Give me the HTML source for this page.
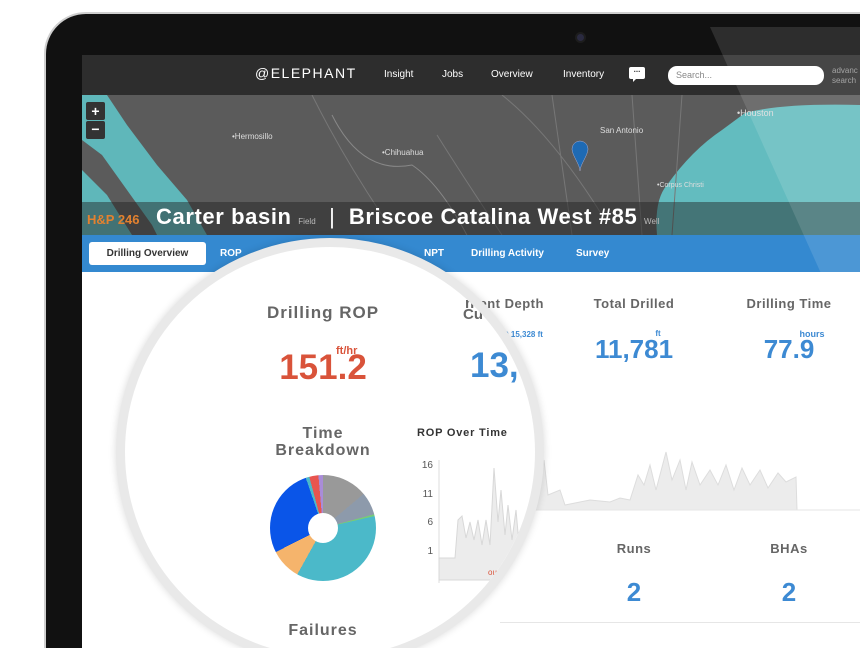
<!DOCTYPE html>
<html style="width:860px;height:648px;overflow:hidden"><head><meta charset="utf-8"><style>
*{margin:0;padding:0;box-sizing:border-box}
body{width:860px;height:648px;overflow:hidden;background:#fff;font-family:"Liberation Sans",sans-serif;position:relative}
#w{position:absolute;left:0;top:0;width:860px;height:648px;overflow:hidden}
.a{position:absolute;white-space:nowrap}
.nav{color:#fff;font-size:10px;top:69px}
.tab{color:#fff;font-size:10px;font-weight:bold;top:248px}
.h{color:#666;font-weight:bold;letter-spacing:.5px;transform:translateX(-50%)}
.bl{color:#3d8ad3;font-weight:bold;transform:translateX(-50%)}
</style></head><body><div id="w">
<div class="a" style="left:44px;top:12px;width:816px;height:636px;background:#111;border-radius:42px 0 0 0;border:2px solid #cfcfcf;border-right:none;border-bottom:none"></div>
<div class="a" style="left:575px;top:32px;width:11px;height:11px;border-radius:50%;background:#2a2a40;border:2px solid #1d1d1d"></div>
<div class="a" style="left:82px;top:272px;width:778px;height:376px;background:#fff"></div>
<div class="a" style="left:82px;top:55px;width:778px;height:40px;background:#2d2d2d"></div>
<div class="a" style="left:255px;top:65px;color:#fff;font-size:14px;letter-spacing:1.5px">@ELEPHANT</div>
<div class="a nav" style="left:384px">Insight</div>
<div class="a nav" style="left:442px">Jobs</div>
<div class="a nav" style="left:491px">Overview</div>
<div class="a nav" style="left:563px">Inventory</div>
<div class="a" style="left:629px;top:67px;width:16px;height:12px;background:#fff;border-radius:2px;color:#333;font-size:8px;line-height:6px;text-align:center;font-weight:bold">...</div>
<div class="a" style="left:633px;top:78px;width:0;height:0;border-left:4px solid #fff;border-bottom:4px solid transparent"></div>
<div class="a" style="left:668px;top:66px;width:156px;height:19px;background:#fff;border-radius:9px;color:#888;font-size:9px;line-height:19px;padding-left:8px">Search...</div>
<div class="a" style="left:832px;top:66px;color:#999;font-size:8px;line-height:10px">advanc<br>search</div>
<svg class="a" style="left:82px;top:95px" width="778" height="140">
<rect width="778" height="140" fill="#5b5b5b"/>
<path d="M0 0 L25 0 L45 30 L75 70 L105 105 L125 140 L0 140Z" fill="#5fb7ba"/>
<path d="M0 45 L20 60 L45 95 L70 130 L75 140 L50 140 L25 100 L0 75Z" fill="#5b5b5b"/>
<path d="M663 18 Q700 8 778 10 L778 140 L575 140 Q572 105 585 90 Q610 55 640 35Z" fill="#63bcbf"/>
<path d="M230 0 Q260 60 300 120 M355 40 Q380 80 420 140 M420 0 Q470 40 520 120 M470 0 L490 140 M550 0 L560 140 M600 0 L590 140" stroke="#777" stroke-width="1" fill="none"/>
<path d="M250 20 Q280 80 330 70 Q360 90 390 150" stroke="#888" fill="none"/>
<text x="150" y="44" fill="#ddd" font-size="8">•Hermosillo</text>
<text x="300" y="60" fill="#ddd" font-size="8">•Chihuahua</text>
<text x="518" y="38" fill="#ddd" font-size="8">San Antonio</text>
<text x="655" y="21" fill="#ddd" font-size="9">•Houston</text>
<text x="575" y="92" fill="#ddd" font-size="7">•Corpus Christi</text>
<path d="M490 54 a8 8 0 0 1 16 0 c0 6-8 16-8 22 c0-6-8-16-8-22z" fill="#1e6ab4" stroke="#aac" stroke-width=".5"/>
<rect x="0" y="107" width="778" height="33" fill="rgba(30,30,30,.45)"/>
</svg>
<div class="a" style="left:86px;top:102px;width:19px;height:18px;background:#333;color:#fff;font-weight:bold;text-align:center;line-height:18px;font-size:14px;border-radius:2px">+</div>
<div class="a" style="left:86px;top:121px;width:19px;height:18px;background:#333;color:#fff;font-weight:bold;text-align:center;line-height:16px;font-size:14px;border-radius:2px">−</div>
<div class="a" style="left:87px;top:212px;color:#e3812f;font-size:13px;font-weight:bold">H&amp;P 246</div>
<div class="a" style="left:156px;top:204px;color:#fff;font-size:22px;font-weight:bold;letter-spacing:.6px">Carter basin <span style="font-size:8px;font-weight:normal;color:#bbb;letter-spacing:0">Field</span> &nbsp;<span style="font-weight:normal">|</span>&nbsp; Briscoe Catalina West #85 <span style="font-size:8px;font-weight:normal;color:#bbb;letter-spacing:0">Well</span></div>
<div class="a" style="left:82px;top:235px;width:778px;height:37px;background:#3489d0"></div>
<div class="a" style="left:89px;top:242px;width:117px;height:23px;background:#fff;border-radius:3px;color:#333;font-size:10px;font-weight:bold;line-height:23px;text-align:center">Drilling Overview</div>
<div class="a tab" style="left:220px">ROP</div>
<div class="a tab" style="left:268px">Runs</div>
<div class="a tab" style="left:318px">R</div>
<div class="a tab" style="left:370px">BHAs</div>
<div class="a tab" style="left:424px">NPT</div>
<div class="a tab" style="left:471px">Drilling Activity</div>
<div class="a tab" style="left:576px">Survey</div>
<div class="a h" style="left:497px;top:296px;font-size:13px">Current Depth</div>
<div class="a" style="left:498px;top:330px;color:#3d8ad3;font-size:8px;font-weight:bold">TD 15,328 ft</div>
<div class="a h" style="left:634px;top:296px;font-size:13px">Total Drilled</div>
<div class="a bl" style="left:658px;top:329px;font-size:8px">ft</div>
<div class="a bl" style="left:634px;top:334px;font-size:26px">11,781</div>
<div class="a h" style="left:789px;top:296px;font-size:13px">Drilling Time</div>
<div class="a bl" style="left:812px;top:329px;font-size:9px">hours</div>
<div class="a bl" style="left:789px;top:334px;font-size:26px">77.9</div>
<svg class="a" style="left:520px;top:440px" width="340" height="80">
<path d="M0 70 L0 30 L10 55 L20 50 L24 20 L28 55 L40 50 L45 65 L70 60 L90 62 L100 58 L110 60 L118 35 L124 45 L130 25 L136 50 L146 12 L152 40 L160 20 L166 50 L172 22 L180 45 L190 30 L198 45 L206 25 L214 50 L222 28 L230 45 L240 30 L248 48 L258 33 L266 42 L276 37 L277 70Z" fill="#ececec" stroke="#ddd"/>
<line x1="0" y1="70" x2="340" y2="70" stroke="#e6e6e6"/>
</svg>
<div class="a h" style="left:634px;top:541px;font-size:13px">Runs</div>
<div class="a bl" style="left:634px;top:577px;font-size:26px">2</div>
<div class="a h" style="left:789px;top:541px;font-size:13px">BHAs</div>
<div class="a bl" style="left:789px;top:577px;font-size:26px">2</div>
<div class="a" style="left:500px;top:622px;width:360px;height:1px;background:#e6e6e6"></div>
<div class="a" style="left:116px;top:238px;width:428px;height:428px;border-radius:50%;background:#fff;border:9px solid #e9e9e9;box-shadow:0 0 8px rgba(0,0,0,.15);overflow:hidden">
<div style="position:relative;left:-125px;top:-247px;width:860px;height:648px">
<div class="a h" style="left:323px;top:303px;font-size:17px;letter-spacing:1px">Drilling ROP</div>
<div class="a" style="left:336px;top:345px;color:#d9533a;font-size:11px;font-weight:bold">ft/hr</div>
<div class="a" style="left:323px;top:348px;transform:translateX(-50%);color:#d9533a;font-size:35px;font-weight:bold">151.2</div>
<div class="a" style="left:465px;top:295px;color:#666;font-weight:bold;font-size:15px">nt Depth</div>
<div class="a" style="left:463px;top:306px;color:#666;font-weight:bold;font-size:15px">Cu</div>
<div class="a" style="left:500px;top:328px;color:#3d8ad3;font-size:8px;font-weight:bold">TD 15,328 ft</div>
<div class="a" style="left:470px;top:346px;color:#3d8ad3;font-size:35px;font-weight:bold">13,318</div>
<div class="a h" style="left:323px;top:425px;font-size:16px;line-height:17px;text-align:center;letter-spacing:1px">Time<br>Breakdown</div>
<div class="a" style="left:270px;top:475px;width:106px;height:106px;border-radius:50%;background:conic-gradient(#999 0 50deg,#8d9aab 50deg 75deg,#7c7 75deg 77deg,#4bb9c9 77deg 209deg,#f5b46c 209deg 243deg,#0a55e8 243deg 341deg,#4bb9c9 341deg 345deg,#e8554f 345deg 355deg,#a98cd8 355deg 360deg)"></div>
<div class="a" style="left:308px;top:513px;width:30px;height:30px;border-radius:50%;background:#fff"></div>
<div class="a" style="left:417px;top:427px;color:#333;font-size:11px;font-weight:bold;letter-spacing:.8px">ROP Over Time</div>
<div class="a" style="left:421px;top:452px;color:#555;font-size:10px;line-height:28.7px;text-align:right;width:12px">16<br>11<br>6<br>1</div>
<svg class="a" style="left:438px;top:460px" width="130" height="125">
<line x1="1" y1="0" x2="1" y2="123" stroke="#ddd"/>
<path d="M1 120 L1 98 L17 98 L20 60 L24 56 L28 78 L32 62 L36 80 L40 60 L44 85 L48 60 L52 85 L56 8 L60 62 L63 30 L67 75 L70 45 L74 80 L78 50 L82 95 L85 70 L89 95 L93 75 L97 85 L101 60 L108 75 L112 45 L120 40 L125 30 L130 35 L130 120Z" fill="#ececec" stroke="#d8d8d8"/>
</svg>
<div class="a" style="left:488px;top:568px;color:#d9533a;font-size:8px">ours</div>
<div class="a" style="left:482px;top:577px;color:#d9533a;font-size:26px;font-weight:bold">.0</div>
<div class="a h" style="left:323px;top:622px;font-size:16px;letter-spacing:1px">Failures</div>
</div></div>
<svg class="a" style="left:0;top:0" width="860" height="648"><path d="M710 27 L860 27 L860 360 Z" fill="rgba(255,255,255,.12)"/></svg>
</div></body></html>
